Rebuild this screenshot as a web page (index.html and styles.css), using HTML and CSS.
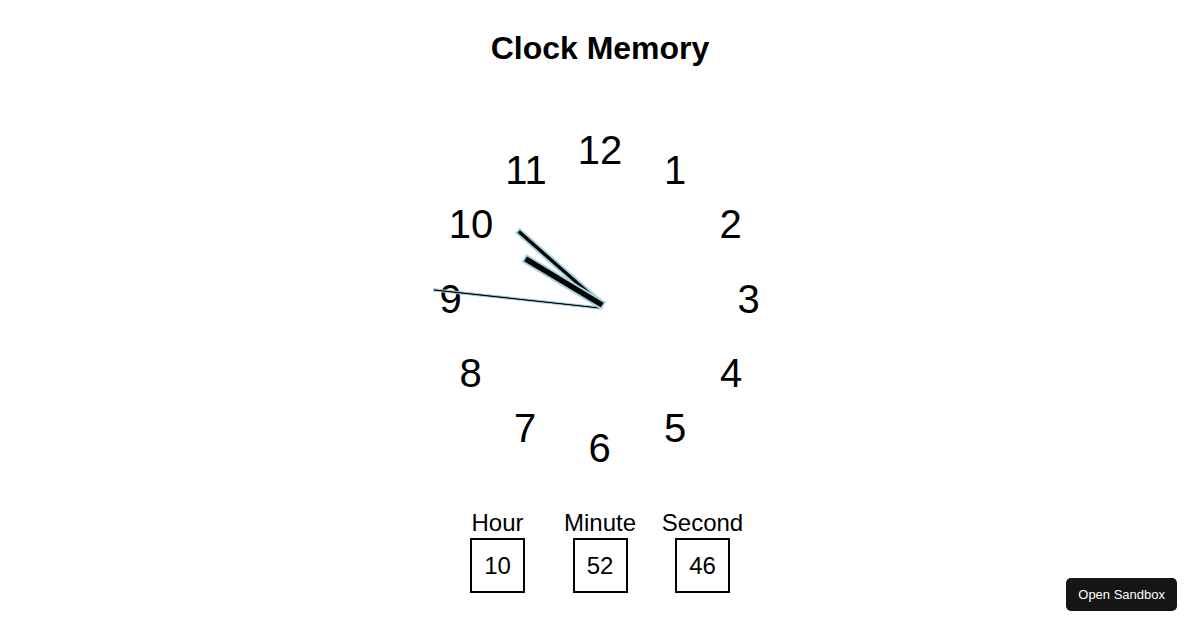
FILE: index.html
```html
<!DOCTYPE html>
<html lang="en">
<head>
<meta charset="utf-8">
<title>Clock Memory</title>
<link rel="stylesheet" href="styles.css">
</head>
<body>
<main class="app">
  <h1 class="title">Clock Memory</h1>
  <svg class="clock" width="400" height="400" viewBox="0 0 400 400" xmlns="http://www.w3.org/2000/svg">
    <g class="numbers">
      <text x="200" y="64.5">12</text>
      <text x="275" y="84.5">1</text>
      <text x="330.5" y="139">2</text>
      <text x="348.5" y="213.5">3</text>
      <text x="331" y="288">4</text>
      <text x="275" y="342.5">5</text>
      <text x="199.5" y="362.5">6</text>
      <text x="125" y="342.5">7</text>
      <text x="70.5" y="288">8</text>
      <text x="50.5" y="213.5">9</text>
      <text x="71" y="139">10</text>
      <text x="126" y="84.5">11</text>
    </g>
    <g class="hands">
      <rect class="hand hand-second" x="0" y="-1.1" width="167.5" height="2.2" transform="translate(200 209) rotate(186.2)"/>
      <rect class="hand" x="0" y="-2.6" width="108.4" height="5.2" transform="translate(199.5 203.5) rotate(221.3)"/>
      <rect class="hand" x="0" y="-3.7" width="91.3" height="7.4" transform="translate(203 206.5) rotate(211)"/>
    </g>
  </svg>
  <div class="controls">
    <label class="field">
      <span class="field-label">Hour</span>
      <input class="field-input" type="text" value="10">
    </label>
    <label class="field">
      <span class="field-label">Minute</span>
      <input class="field-input" type="text" value="52">
    </label>
    <label class="field">
      <span class="field-label">Second</span>
      <input class="field-input" type="text" value="46">
    </label>
  </div>
</main>
<button class="sandbox-btn" type="button">Open Sandbox</button>
</body>
</html>
```

FILE: styles.css
```css
html, body {
  margin: 0;
  padding: 0;
  background: #ffffff;
  color: #000000;
  font-family: "Liberation Sans", Arial, sans-serif;
}

.app {
  display: flex;
  flex-direction: column;
  align-items: center;
}

.title {
  margin: 30px 0 0;
  font-size: 32px;
  font-weight: bold;
  line-height: 37px;
}

.clock {
  display: block;
  margin-top: 32px;
}

.numbers text {
  font-family: "Liberation Sans", Arial, sans-serif;
  font-size: 40px;
  fill: #000000;
  text-anchor: middle;
}

.hand {
  fill: #000000;
  stroke: #a9d3e2;
  stroke-width: 1.9;
}

.hand-second {
  stroke-width: 0.9;
}

.controls {
  display: grid;
  grid-template-columns: repeat(3, 102.5px);
  margin-top: 10px;
}

.field {
  display: flex;
  flex-direction: column;
  align-items: center;
}

.field-label {
  font-size: 24px;
  line-height: 28px;
  white-space: nowrap;
}

.field-input {
  box-sizing: border-box;
  width: 55px;
  height: 55px;
  margin-top: 1px;
  padding: 0;
  border: 2px solid #000000;
  border-radius: 0;
  background: #ffffff;
  color: #000000;
  font-family: "Liberation Sans", Arial, sans-serif;
  font-size: 24px;
  text-align: center;
  outline: none;
}

.sandbox-btn {
  position: fixed;
  right: 23px;
  bottom: 19px;
  height: 33px;
  padding: 0 12px;
  border: none;
  border-radius: 5px;
  background: #151515;
  color: #ffffff;
  font-family: "Liberation Sans", Arial, sans-serif;
  font-size: 13px;
  cursor: pointer;
}
```
